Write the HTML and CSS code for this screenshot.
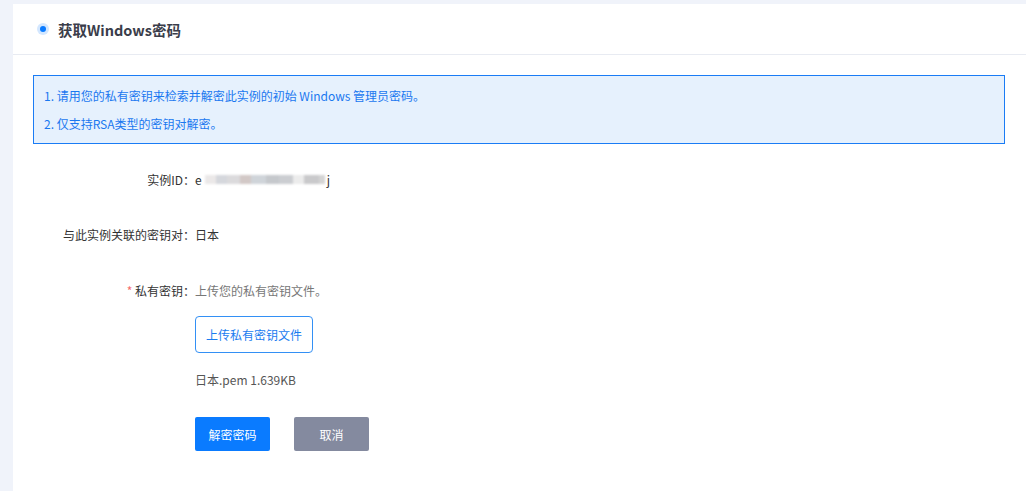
FILE: index.html
```html
<!DOCTYPE html>
<html>
<head>
<meta charset="utf-8">
<link rel="stylesheet" href="styles.css">
</head>
<body>
<div class="page">
  <div class="card">
    <div class="card-head">
      <span class="dot"></span>
      <span class="title">获取Windows密码</span>
    </div>
    <div class="card-body">
      <div class="alert">
        <p>1. 请用您的私有密钥来检索并解密此实例的初始 Windows 管理员密码。</p>
        <p>2. 仅支持RSA类型的密钥对解密。</p>
      </div>
      <div class="form">
        <div class="row r1">
          <div class="label">实例ID：</div>
          <div class="value">e<span class="blur"><i class="b1"></i><i class="b2"></i><i class="b3"></i><i class="b4"></i><i class="b5"></i><i class="b6"></i><i class="b7"></i><i class="b8"></i><i class="b9"></i><i class="b10"></i></span>j</div>
        </div>
        <div class="row r2">
          <div class="label">与此实例关联的密钥对：</div>
          <div class="value">日本</div>
        </div>
        <div class="row r3">
          <div class="label"><span class="req">*</span> 私有密钥：</div>
          <div class="value hint">上传您的私有密钥文件。</div>
        </div>
        <div class="indent">
          <button class="btn-upload">上传私有密钥文件</button>
          <div class="file">日本.pem 1.639KB</div>
          <div class="actions">
            <button class="btn-primary">解密密码</button>
            <button class="btn-cancel">取消</button>
          </div>
        </div>
      </div>
    </div>
  </div>
</div>
</body>
</html>
```

FILE: styles.css
```css
* { box-sizing: border-box; }
html, body { margin: 0; padding: 0; }
body {
  background: #f0f3fa;
  font-family: "Microsoft YaHei", "Noto Sans CJK SC", "Liberation Sans", sans-serif;
  font-size: 12px;
  color: #333;
  width: 1026px;
  height: 491px;
  overflow: hidden;
}
.page { padding: 4px 0 0 13px; height: 491px; }
.card { background: #fff; height: 487px; }
.card-head {
  height: 51px;
  border-bottom: 1px solid #e8ebf2;
  display: flex;
  align-items: center;
  padding-left: 24px;
}
.dot {
  width: 12px; height: 12px; border-radius: 50%;
  background: #d3e7ff;
  display: flex; align-items: center; justify-content: center;
  margin-right: 9px;
}
.dot::after {
  content: ""; width: 6px; height: 6px; border-radius: 50%; background: #0a7bff;
}
.title { font-size: 14.5px; font-weight: bold; color: #3a3d4a; }
.card-body { padding: 20px 21px 0 20px; }
.alert {
  border: 1px solid #1a7cf5;
  background: #e6f1fd;
  color: #1a78f0;
  padding: 6px 10px 0 10px;
  height: 69px;
}
.alert p { margin: 0; line-height: 28px; height: 28px; }
.form { padding-top: 23px; }
.row { display: flex; align-items: center; height: 24px; }
.r2 { margin-top: 31px; }
.r3 { margin-top: 32px; }
.label { width: 162px; text-align: right; color: #333; }
.req { color: #f56c6c; }
.value { color: #333; display: flex; align-items: center; }
.hint { color: #777; }
.blur { display: inline-flex; height: 12px; margin: 0 2px 0 3px; filter: blur(0.8px); }
.blur i { display: block; height: 9px; margin-top: 2px; }
.b1 { width: 11px; background: #ebe8e8; }
.b2 { width: 11px; background: #d5d7dc; }
.b3 { width: 13px; background: #dbdadc; }
.b4 { width: 11px; background: #d2c8c6; }
.b5 { width: 15px; background: #cfd4d9; }
.b6 { width: 13px; background: #c5c8cc; }
.b7 { width: 14px; background: #cbcdd1; }
.b8 { width: 11px; background: #ececec; }
.b9 { width: 15px; background: #c9c9cb; }
.b10 { width: 6px; background: #d4d4d4; }
.indent { padding-left: 162px; }
.btn-upload {
  margin-top: 14px;
  height: 37px; width: 118px;
  border: 1px solid #3390f5; border-radius: 4px;
  background: #fff; color: #1a7cf0;
  font-family: inherit; font-size: 12px;
  display: block;
}
.file { margin-top: 18px; line-height: 17px; color: #555; }
.actions { display: flex; gap: 24px; margin-top: 29px; }
.actions button {
  height: 34px; width: 75px; border: none; border-radius: 2px;
  font-family: inherit; font-size: 12px; color: #fff;
}
.btn-primary { background: #0a7bff; }
.btn-cancel { background: #848a9f; }
```
